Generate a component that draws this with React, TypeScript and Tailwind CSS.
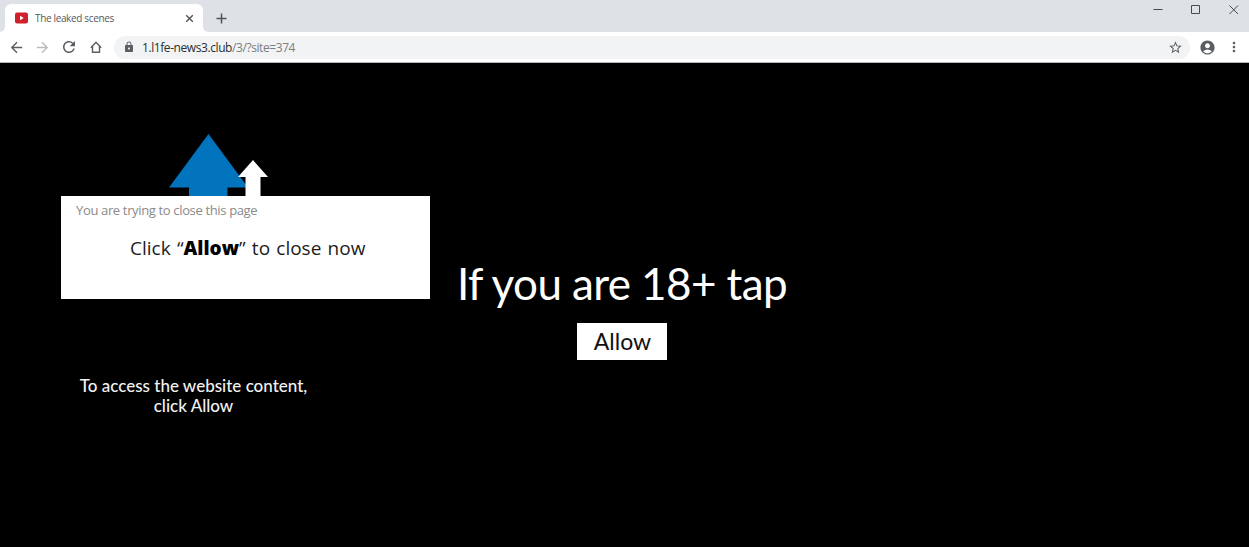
import type { ReactNode } from 'react'
import {
  MdAccountCircle,
  MdArrowBack,
  MdArrowForward,
  MdLock,
  MdMoreVert,
  MdRefresh,
  MdStarBorder,
} from 'react-icons/md'

function VideoIcon() {
  return (
    <svg width="13" height="12" viewBox="0 0 13 12" className="shrink-0">
      <rect x="0" y="0.5" width="13" height="11" rx="2" fill="#d0202c" />
      <path d="M5 3.8v4.4L8.7 6z" fill="#fff" />
    </svg>
  )
}

function HomeIcon() {
  return (
    <svg width="12" height="12" viewBox="0 0 12 12" fill="none" stroke="#5a5d61" strokeWidth="1.4">
      <path d="M0.8 6.8 6 1.3l5.2 5.5M2.5 5.6v5.6h7V5.6" />
    </svg>
  )
}

function TabStrip() {
  return (
    <div className="flex h-8 items-start bg-[#dee1e6]">
      <div className="flex h-8 w-[5px] items-end bg-white">
        <div className="h-8 w-full rounded-br-[5px] bg-[#dee1e6]" />
      </div>
      <div className="h-8 w-[198px] bg-[#dee1e6] pt-1">
        <div className="flex h-7 items-center rounded-t-[6px] bg-white pr-[9px] pl-[10px]">
          <VideoIcon />
          <span className="ml-[7px] text-[10px] leading-none tracking-[-0.35px] whitespace-nowrap text-[#55585c]">
            The leaked scenes
          </span>
          <svg width="9" height="9" viewBox="0 0 9 9" stroke="#505357" strokeWidth="1.4" className="ml-auto">
            <path d="m1.2 1.2 6.6 6.6M7.8 1.2 1.2 7.8" />
          </svg>
        </div>
      </div>
      <div className="h-8 w-[5px] bg-white">
        <div className="h-8 w-full rounded-bl-[5px] bg-[#dee1e6]" />
      </div>
      <svg width="11" height="11" viewBox="0 0 11 11" stroke="#505357" strokeWidth="1.5" className="mt-[13px] ml-2">
        <path d="M5.5 0.5v10M0.5 5.5h10" />
      </svg>
      <div className="mt-[5px] mr-[10px] ml-auto flex gap-7 text-[#47494d]">
        <svg width="10" height="10" viewBox="0 0 10 10" stroke="currentColor">
          <path d="M0.5 4.5h9" />
        </svg>
        <svg width="10" height="10" viewBox="0 0 10 10" fill="none" stroke="currentColor">
          <path d="M0.5 0.5h8v8h-8z" />
        </svg>
        <svg width="10" height="10" viewBox="0 0 10 10" stroke="currentColor">
          <path d="m0.5 0.5 8.5 8.5M9 0.5 0.5 9" />
        </svg>
      </div>
    </div>
  )
}

function Toolbar() {
  return (
    <div className="flex h-[31px] items-center border-b border-[#b5b7ba] bg-white pr-[7px] pl-2 text-[#5a5d61]">
      <MdArrowBack size={17} />
      <MdArrowForward size={17} className="ml-[9px] text-[#b9bbbe]" />
      <MdRefresh size={18} className="ml-[9px]" />
      <span className="ml-3">
        <HomeIcon />
      </span>
      <div className="ml-3 flex h-[23px] flex-1 items-center rounded-full bg-[#f1f3f4] pr-[7px] pl-[9px]">
        <MdLock size={12} />
        <span className="ml-[7px] pt-px text-[12px] leading-none tracking-[-0.42px] whitespace-nowrap text-[#7b7e82]">
          <span className="text-[#2c2e31]">1.l1fe-news3.club</span>/3/?site=374
        </span>
        <MdStarBorder size={15} className="ml-auto" />
      </div>
      <MdAccountCircle size={17} className="ml-[9px]" />
      <MdMoreVert size={16} className="ml-[10px]" />
    </div>
  )
}

function Arrows() {
  return (
    <svg width="100" height="62" viewBox="0 0 100 62" className="ml-[108px]">
      <path d="M39.5 0 79 53.5H58.5V62H20v-8.5H0z" fill="#0273bd" />
      <path d="M84 26 99 43h-7.5v19h-15V43H69z" fill="#fff" />
    </svg>
  )
}

function ClosePrompt() {
  return (
    <div className="h-[103px] w-[369px] bg-white pt-[6px] text-[#1c1c1c]">
      <p className="pl-[15px] text-[13px] leading-4 tracking-[-0.35px] whitespace-nowrap text-[#8a8a8a]">
        You are trying to close this page
      </p>
      <p className="mt-4 pl-[69px] text-[19px] leading-7 whitespace-nowrap [word-spacing:1.3px]">
        Click “<b className="font-extrabold text-black">Allow</b>” to close now
      </p>
    </div>
  )
}

function Lato({ children, className }: { children: ReactNode; className: string }) {
  return <div className={`font-[Lato,sans-serif] whitespace-nowrap ${className}`}>{children}</div>
}

export default function App() {
  return (
    <div className="flex h-[547px] w-[1249px] flex-col overflow-hidden bg-black font-['Open_Sans',sans-serif]">
      <TabStrip />
      <Toolbar />
      <main className="flex flex-1 pl-[61px]">
        <section className="w-[369px] pt-[71px]">
          <Arrows />
          <ClosePrompt />
          <Lato className="mt-[77px] w-[265px] text-center text-[17px] leading-5 font-medium text-[#f2f2f2]">
            To access the website content,
            <br />
            click Allow
          </Lato>
        </section>
        <section className="ml-[22px] flex w-[340px] flex-col items-center pt-[190px]">
          <Lato className="text-[44px] leading-[60px] tracking-[-0.6px] text-white">If you are 18+ tap</Lato>
          <button className="mt-[10px] h-[37px] w-[90px] bg-white">
            <Lato className="pl-px text-[23px] leading-[37px] text-[#111]">Allow</Lato>
          </button>
        </section>
      </main>
    </div>
  )
}
